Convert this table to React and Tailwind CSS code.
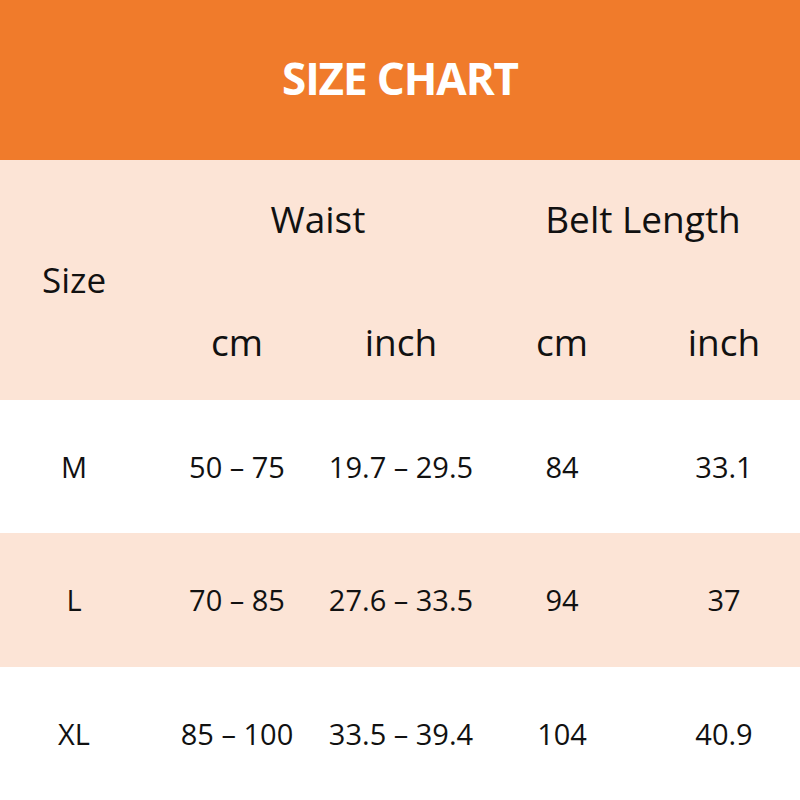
import React from 'react';

const rows = [
  { size: 'M', cm: '50 – 75', inch: '19.7 – 29.5', beltCm: '84', beltInch: '33.1', shade: false },
  { size: 'L', cm: '70 – 85', inch: '27.6 – 33.5', beltCm: '94', beltInch: '37', shade: true },
  { size: 'XL', cm: '85 – 100', inch: '33.5 – 39.4', beltCm: '104', beltInch: '40.9', shade: false },
];

const cols = 'grid grid-cols-[148px_178px_150px_172px_152px]';

export default function App() {
  return (
    <div className="w-[800px] h-[800px] flex flex-col bg-white text-[#111] font-['Open_Sans',sans-serif]">
      <header className="h-[160px] bg-[#F07B2B] flex items-center justify-center pb-[4px]">
        <h1 className="text-white font-bold text-[44px] tracking-tight">SIZE CHART</h1>
      </header>

      {/* column headings */}
      <div className={`${cols} h-[240px] bg-[#FCE4D6] text-[37px]`}>
        <div className="row-span-2 flex items-center justify-center text-[35px]">Size</div>
        <div className="col-span-2 flex items-center justify-center pb-[6px] pl-[12px]">Waist</div>
        <div className="col-span-2 flex items-center justify-center pb-[6px] pl-[10px]">Belt Length</div>
        <div className="flex items-center justify-center">cm</div>
        <div className="flex items-center justify-center">inch</div>
        <div className="flex items-center justify-center">cm</div>
        <div className="flex items-center justify-center">inch</div>
      </div>

      {rows.map((r) => (
        <div
          key={r.size}
          className={`${cols} flex-1 items-center text-[29px] ${r.shade ? 'bg-[#FCE4D6]' : 'bg-white'}`}
        >
          <div className="text-center">{r.size}</div>
          <div className="text-center">{r.cm}</div>
          <div className="text-center">{r.inch}</div>
          <div className="text-center">{r.beltCm}</div>
          <div className="text-center">{r.beltInch}</div>
        </div>
      ))}
    </div>
  );
}
